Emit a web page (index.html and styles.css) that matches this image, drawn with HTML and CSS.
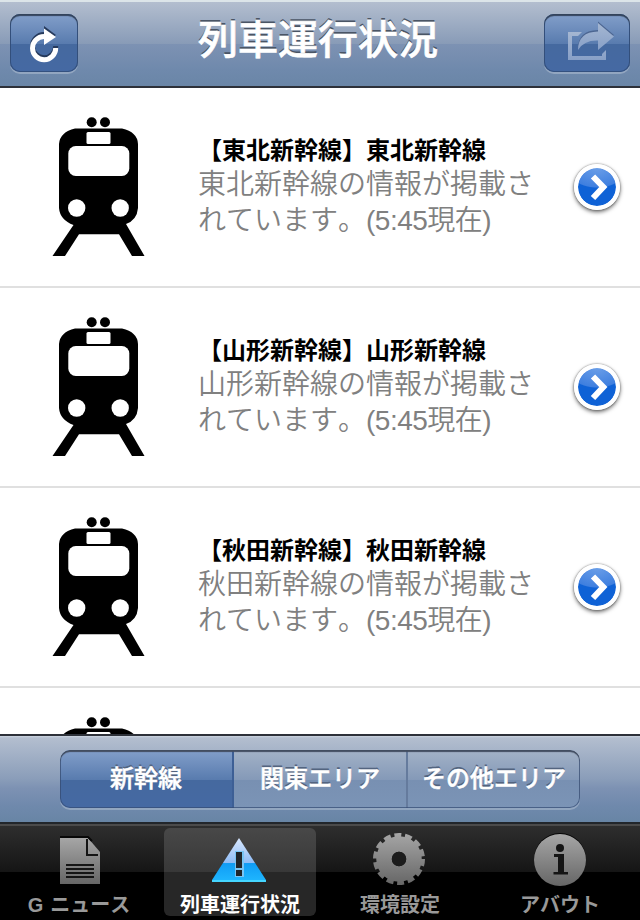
FILE: index.html
```html
<!DOCTYPE html>
<html lang="ja">
<head>
	<meta charset="utf-8">
	<title>列車運行状況</title>
	<link rel="stylesheet" href="styles.css">
</head>
<body>
<!-- shared shapes -->
<svg class="defs" width="0" height="0">
	<defs>
		<symbol id="train" viewBox="0 0 120 170">
			<circle cx="51.7" cy="22.2" r="5"/>
			<circle cx="65" cy="22.2" r="5"/>
			<path d="M35 28.500H82Q97.500 32 98 44V108Q97 120 86 124L104.500 156H92L79 134.300H39L25 156H12.500L33.500 125Q20 120 19 108V44Q20 32 35 28.500Z"/>
			<rect x="46.500" y="32" width="24" height="12" rx="1.500" fill="#fff"/>
			<rect x="28.300" y="46" width="61" height="30" rx="7.500" fill="#fff"/>
			<circle cx="36.700" cy="108" r="8.700" fill="#fff"/>
			<circle cx="80.200" cy="108" r="8.700" fill="#fff"/>
		</symbol>
		<linearGradient id="gray" x1="0" y1="0" x2="0" y2="1">
			<stop offset="0" stop-color="#a6a6a6"/>
			<stop offset="1" stop-color="#666"/>
		</linearGradient>
		<linearGradient id="gear" gradientUnits="userSpaceOnUse" x1="0" y1="5" x2="0" y2="57">
			<stop offset="0" stop-color="#a6a6a6"/>
			<stop offset="1" stop-color="#666"/>
		</linearGradient>
		<linearGradient id="blue" x1="0" y1="0" x2="0" y2="1">
			<stop offset="0" stop-color="#d9e8ff"/>
			<stop offset=".56" stop-color="#8fbcf6"/>
			<stop offset=".58" stop-color="#109cf5"/>
			<stop offset="1" stop-color="#20b8ff"/>
		</linearGradient>
		<linearGradient id="share" x1="0" y1="0" x2="0" y2="1">
			<stop offset="0" stop-color="#a5b7d2"/>
			<stop offset="1" stop-color="#88a0c7"/>
		</linearGradient>
	</defs>
</svg>

<div class="header">
	<div class="btn reload">
		<svg width="68" height="58" viewBox="0 0 68 58">
			<g transform="translate(0 -2)">
				<path d="M45.700 34A11.600 11.600 0 1 1 34 22.500" fill="none" stroke="#263a5c" stroke-width="5"/>
				<path d="M34 14L46 23L34 31Z" fill="#263a5c"/>
			</g>
			<path d="M45.700 34A11.600 11.600 0 1 1 34 22.500" fill="none" stroke="#fff" stroke-width="5"/>
			<path d="M34 14.500L46 23L34 31Z" fill="#fff"/>
		</svg>
	</div>
	<h1>列車運行状況</h1>
	<div class="btn share">
		<svg width="86" height="58" viewBox="0 0 86 58">
			<path d="M38 18H24V46H62V36L58 40V42H28V22H34Z" fill="url(#share)"/>
			<path d="M34 36Q34 18 54 17.500V9L70 22.500L54 36V26.500Q40 26 34 36Z" fill="#4c6692" transform="translate(0 -1.500)"/>
			<path d="M34 36Q34 18 54 17.500V9L70 22.500L54 36V26.500Q40 26 34 36Z" fill="url(#share)"/>
		</svg>
	</div>
</div>

<div class="list">
	<div class="row">
		<svg class="train" width="120" height="170"><use href="#train"/></svg>
		<div class="text">
			<h2>【東北新幹線】東北新幹線</h2>
			<p>東北新幹線の情報が掲載さ</p>
			<p>れています。<span>(5:45現在)</span></p>
		</div>
		<div class="more"><svg width="38" height="38" viewBox="0 0 38 38"><path d="M15 8.500L25.300 19L15 30" fill="none" stroke="#fff" stroke-width="6"/></svg></div>
	</div>
	<div class="row">
		<svg class="train" width="120" height="170"><use href="#train"/></svg>
		<div class="text">
			<h2>【山形新幹線】山形新幹線</h2>
			<p>山形新幹線の情報が掲載さ</p>
			<p>れています。<span>(5:45現在)</span></p>
		</div>
		<div class="more"><svg width="38" height="38" viewBox="0 0 38 38"><path d="M15 8.500L25.300 19L15 30" fill="none" stroke="#fff" stroke-width="6"/></svg></div>
	</div>
	<div class="row">
		<svg class="train" width="120" height="170"><use href="#train"/></svg>
		<div class="text">
			<h2>【秋田新幹線】秋田新幹線</h2>
			<p>秋田新幹線の情報が掲載さ</p>
			<p>れています。<span>(5:45現在)</span></p>
		</div>
		<div class="more"><svg width="38" height="38" viewBox="0 0 38 38"><path d="M15 8.500L25.300 19L15 30" fill="none" stroke="#fff" stroke-width="6"/></svg></div>
	</div>
	<div class="row">
		<svg class="train" width="120" height="170"><use href="#train"/></svg>
	</div>
</div>

<div class="toolbar">
	<ul class="segment">
		<li class="on">新幹線</li>
		<li>関東エリア</li>
		<li>その他エリア</li>
	</ul>
</div>

<ul class="tabs">
	<li>
		<svg width="60" height="60" viewBox="0 0 60 60">
			<path d="M10 10H38L50 24V56H10Z" fill="url(#gray)"/>
			<path d="M37 11V27H48M16 37H44M16 41H44M16 45H44M16 49H44" fill="none" stroke="#151515" stroke-width="2"/>
			<path d="M10 9H38L42 13" fill="none" stroke="#080808" stroke-width="2"/>
		</svg>
		<span class="news"><b>G</b>ニュース</span>
	</li>
	<li class="on">
		<svg width="60" height="60" viewBox="0 0 60 60">
			<path d="M29 10L56 52V54H2V52Z" fill="url(#blue)"/>
			<path d="M2 53H56" stroke="#45d5ff" stroke-width="2"/>
			<rect x="25" y="23" width="9" height="26" fill="#78c4f4"/>
			<rect x="26" y="24" width="6" height="16" fill="#20252b"/>
			<rect x="26" y="42" width="6" height="6" fill="#20252b"/>
		</svg>
		<span>列車運行状況</span>
	</li>
	<li>
		<svg width="60" height="60" viewBox="0 0 60 60">
			<circle cx="29" cy="31" r="15" fill="none" stroke="url(#gear)" stroke-width="15.500"/>
			<circle cx="29" cy="31" r="23.500" fill="none" stroke="url(#gear)" stroke-width="5" stroke-dasharray="6.900 3.646"/>
			<circle cx="29" cy="31" r="7.200" fill="#1c1c1c"/>
		</svg>
		<span>環境設定</span>
	</li>
	<li>
		<svg width="60" height="60" viewBox="0 0 60 60">
			<circle cx="30" cy="31" r="26" fill="#050505"/>
			<circle cx="30" cy="32" r="26" fill="url(#gray)"/>
			<circle cx="30" cy="20" r="4" fill="#151515"/>
			<path d="M24 26H34V44H38V46.500H23.500V44H28V29H24Z" fill="#151515"/>
		</svg>
		<span>アバウト</span>
	</li>
</ul>
</body>
</html>
```
FILE: styles.css
```css
body,ul,li,h1,h2,p{
	margin:0;
	padding:0;
}
li{
	list-style: none;
}
body{
	width:640px;
	height:920px;
	overflow: hidden;
	background: #fff;
	font-family: "Noto Sans CJK JP", sans-serif;
	font-kerning: none;
}
svg{
	display: block;
}
.defs{
	position: absolute;
}

/* header */
.header{
	box-sizing: border-box;
	height:88px;
	padding:0 10px 2px;
	display: flex;
	justify-content: space-between;
	align-items: center;
	border-top:2px solid #dce5e9;
	border-bottom:2px solid #2d3139;
	background: linear-gradient(#b3becf 0, #889bb7 42px, #7d92b3 42px, #6f89ac 68px, #6a86a7 84px);
}
.header h1{
	width:240px;
	margin-left:18px;
	margin-right:auto;
	padding:0 0 12px 102px;
	line-height:72px;
	font-size:40px;
	font-weight: 500;
	-webkit-text-stroke:0.7px #fff;
	white-space: nowrap;
	color:#fff;
	text-shadow:0 -2px 0 #4a5565;
}
.btn{
	box-sizing: border-box;
	width:68px;
	height:58px;
	flex:none;
	border-radius: 10px;
	background: linear-gradient(#839fca 0, #587bae 30px, #45699f 30px, #4569a3 58px);
	box-shadow:inset 0 2px 1px #34445c, inset 0 0 0 1px #34517f, 0 2px 0 rgba(255,255,255,0.25);
}
.share{
	width:86px;
}

/* list */
.list{
	height:646px;
	overflow: hidden;
}
.row{
	box-sizing: border-box;
	height:200px;
	display: flex;
	align-items: flex-start;
	border-bottom:2px solid #e0e0e0;
}
.train{
	margin:12px 38px 0 40px;
	flex:none;
}
.text{
	width:340px;
	margin-right:36px;
	padding-top:45px;
}
.text h2{
	line-height:32px;
	font-size:24px;
	font-weight: 700;
	white-space: nowrap;
	color:#000;
}
.text p{
	height:36px;
	line-height:34px;
	font-size:28px;
	font-weight: 350;
	white-space: nowrap;
	color:#808080;
}
.text p span{
	font-family: "Liberation Sans", "Noto Sans CJK JP", sans-serif;
	letter-spacing: -0.5px;
}
.more{
	width:38px;
	height:38px;
	margin-top:76px;
	border:4px solid #fff;
	border-radius: 50%;
	background: radial-gradient(ellipse 30px 20px at 50% 0, #6a9ee8 0, #3f7fdf 95%, #0f62d6 100%);
	background-clip: padding-box;
	background-origin: padding-box;
	background-repeat: no-repeat;
	box-shadow:0 2px 4px rgba(0,0,0,0.6), 0 0 2px rgba(0,0,0,0.45);
}

/* toolbar */
.toolbar{
	box-sizing: border-box;
	height:90px;
	padding-top:14px;
	border-top:2px solid #2d3139;
	border-bottom:2px solid #22262b;
	background: linear-gradient(#ccd4df 0, #b3becf 2px, #8a9db9 43px, #7d92b3 52px, #6f89ac 70px, #6885a5 86px);
}
.segment{
	width:520px;
	height:58px;
	margin:0 auto;
	display: flex;
	border-radius: 10px;
	overflow: hidden;
	position: relative;
	background: linear-gradient(#a3b2c7 0, #8499b8 30px, #7890b2 30px, #7b94b6 58px);
	box-shadow:0 2px 0 rgba(255,255,255,0.25);
}
.segment:after{
	content:"";
	position: absolute;
	left:0;
	top:0;
	right:0;
	bottom:0;
	border-radius: 10px;
	box-shadow:inset 0 2px 1px #424d60, inset 0 0 0 1px rgba(52,76,116,0.7);
}
.segment li{
	box-sizing: border-box;
	width:174px;
	line-height:54px;
	text-align: center;
	font-size:24px;
	font-weight: 500;
	-webkit-text-stroke:0.5px #fff;
	color:#fff;
	text-shadow:0 -2px 0 #53647f;
	border-left:2px solid #657b9d;
}
.segment li.on{
	border-left:0;
	border-right:2px solid #3d5f95;
	background: linear-gradient(#839fca 0, #587bae 30px, #45699f 30px, #4569a3 58px);
}
.segment li.on + li{
	width:172px;
	border-left:0;
}

/* tab bar */
.tabs{
	box-sizing: border-box;
	height:96px;
	padding:4px;
	display: flex;
	gap:8px;
	background: linear-gradient(#4b4b4b 0, #4b4b4b 2px, #2e2e2e 2px, #151515 48px, #000 48px);
}
.tabs li{
	width:152px;
	height:88px;
	display: flex;
	flex-direction: column;
	align-items: center;
	border-radius: 6px;
	color:#999;
}
.tabs li.on{
	color:#fff;
	background: linear-gradient(#484848 0, #383838 44px, #272727 44px);
}
.tabs svg{
	flex:none;
}
.tabs span{
	line-height:31px;
	font-size:20px;
	font-weight: 700;
	white-space: nowrap;
}
.tabs .news{
	margin-right:2px;
}
.tabs b{
	margin-right:7px;
	font-family: "Liberation Sans", sans-serif;
	font-size:20px;
}
```
